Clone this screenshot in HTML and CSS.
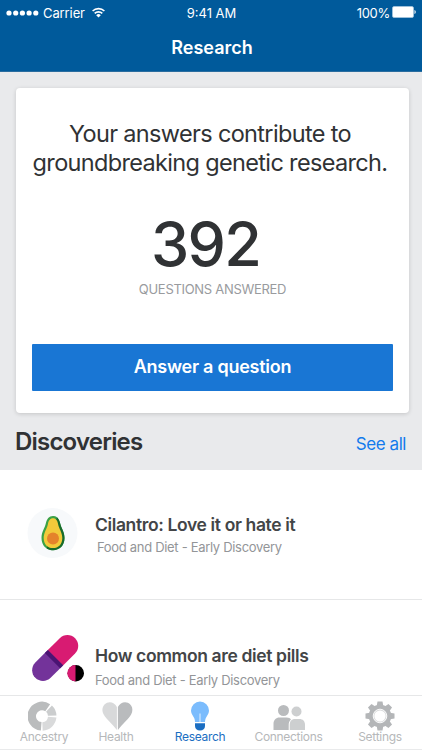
FILE: index.html
```html
<!DOCTYPE html>
<html lang="en">
<head>
    <meta charset="UTF-8">
    <meta name="viewport" content="width=device-width, initial-scale=1.0">
    <title>Research</title>
    <link rel="stylesheet" href="styles.css">
</head>
<body>
    <header class="header">
        <div class="status-bar">
            <div class="status-left">
                <svg class="signal" width="33" height="6" viewBox="0 0 33 6" fill="#fff">
                    <circle cx="3" cy="3" r="2.6"/><circle cx="9.7" cy="3" r="2.6"/><circle cx="16.4" cy="3" r="2.6"/><circle cx="23.1" cy="3" r="2.6"/><circle cx="29.8" cy="3" r="2.6"/>
                </svg>
                <span class="carrier">Carrier</span>
                <svg class="wifi" width="13" height="11" viewBox="0 0 13 11" fill="none" stroke="#fff" stroke-width="1.6">
                    <path d="M.6 4a8.400 8.400 0 0 1 11.800 0M2.700 6.400a5.400 5.400 0 0 1 7.600 0"/>
                    <path d="M6.500 10.600 4.200 8.300a3.200 3.200 0 0 1 4.600 0z" fill="#fff" stroke="none"/>
                </svg>
            </div>
            <div class="status-time">9:41 AM</div>
            <div class="status-right">
                <span class="percent">100%</span>
                <svg class="battery" width="25" height="12" viewBox="0 0 25 12">
                    <rect x=".5" y=".5" width="21" height="11" rx="1.5" fill="#fff" stroke="#a9c9e0" stroke-width=".7"/>
                    <path d="M22.5 4c1.600.4 1.600 3.600 0 4z" fill="#fff"/>
                </svg>
            </div>
        </div>
        <h1 class="title">Research</h1>
    </header>

    <section class="hero">
        <div class="card">
            <p class="intro">Your answers contribute to<br>groundbreaking genetic research.</p>
            <div class="count">392</div>
            <div class="count-label">QUESTIONS ANSWERED</div>
            <button type="button" class="answer-btn">Answer a question</button>
        </div>
        <div class="section-head">
            <h2>Discoveries</h2>
            <a class="see-all">See all</a>
        </div>
    </section>

    <main class="list">
        <article class="item">
            <svg class="item-icon" width="60" height="60" viewBox="0 0 60 60">
                <circle cx="27.5" cy="30" r="25" fill="#f7f9fb"/>
                <path d="M28 13c-4 0-6.300 3-7.200 7.500-.8 4.300-4.300 8-4.300 14.500 0 7.500 5 12.200 11.500 12.200S39.500 42.500 39.500 35c0-6.500-3.500-10.200-4.300-14.500C34.300 16 32 13 28 13z" fill="#3ba246"/>
                <path d="M28 13c4 0 6.300 3 7.200 7.500.8 4.300 4.300 8 4.300 14.500 0 7.500-5 12.200-11.500 12.200-2.500 0-4.600-.6-6.400-1.800L32 14.300C31 13.500 29.600 13 28 13z" fill="#186b2c"/>
                <path d="M28 15.200c-3 0-4.500 2.400-5.100 6-.9 4.700-4.200 8.200-4.200 13.800 0 6.300 3.900 10.100 9.300 10.100s9.300-3.800 9.300-10.100c0-5.600-3.300-9.100-4.200-13.800-.6-3.600-2.100-6-5.100-6z" fill="#f2ca3a"/>
                <circle cx="28" cy="35.500" r="6" fill="#e4832b"/>
            </svg>
            <div class="item-text">
                <h3>Cilantro: Love it or hate it</h3>
                <p class="indent">Food and Diet - Early Discovery</p>
            </div>
        </article>
        <article class="item">
            <svg class="item-icon" width="60" height="60" viewBox="0 0 60 60">
                <g transform="translate(30.200 25) rotate(-45)">
                    <path d="M0-10.800h17.300a10.800 10.800 0 0 1 0 21.600H0z" fill="#d81b72"/>
                    <path d="M0-10.800h-17.300a10.800 10.800 0 0 0 0 21.600H0z" fill="#73339a"/>
                    <path d="M-3.800-10.800h4.300v21.600h-4.300z" fill="#4a1473"/>
                </g>
                <circle cx="50.800" cy="40.200" r="8.200" fill="#000"/>
                <path d="M50.500 32a8.200 8.200 0 0 0 0 16.400z" fill="#d81b72"/>
            </svg>
            <div class="item-text">
                <h3>How common are diet pills</h3>
                <p>Food and Diet - Early Discovery</p>
            </div>
        </article>
    </main>

    <nav class="tabs">
        <div class="tab ancestry">
            <svg width="30" height="30" viewBox="0 0 30 30" fill="none" stroke-width="8.500">
                <path d="M13.200 25.300A10.200 10.200 0 1 1 19.700 6.700" stroke="#babcbd"/>
                <path d="M21 7.600A10.200 10.200 0 0 1 24.200 14.600" stroke="#cbcdce"/>
                <path d="M24.200 16.200A10.200 10.200 0 0 1 14.500 25.400" stroke="#d9dadb"/>
            </svg>
            <span>Ancestry</span>
        </div>
        <div class="tab health">
            <svg width="32" height="30" viewBox="0 0 32 30">
                <path d="M15.900 6C14 1.700 9.500.2 6 1.700 1.500 3.700.2 9 2.700 13.500 5.200 18 11 22.500 15.900 29z" fill="#d8d9da"/>
                <path d="M16.900 6c2-4.300 6.400-5.800 10-4.300 4.500 2 5.700 7.300 3.200 11.800C27.600 18 21.800 22.500 16.900 29z" fill="#b9bbbd"/>
            </svg>
            <span>Health</span>
        </div>
        <div class="tab research">
            <svg width="20" height="30" viewBox="0 0 20 30">
                <path d="M10 .5a9 9 0 0 0-9 9c0 4.500 4 6.200 4 11.500h10c0-5.300 4-7 4-11.500a9 9 0 0 0-9-9z" fill="#7bbcfd"/>
                <path d="M10 12.500v8.500" stroke="#fff" stroke-width=".8"/>
                <path d="M5 22.200h10V25c0 2.800-2 4.500-5 4.500S5 27.800 5 25z" fill="#1b6ec2"/>
            </svg>
            <span>Research</span>
        </div>
        <div class="tab connections">
            <svg width="34" height="30" viewBox="0 0 34 30">
                <circle cx="11.500" cy="9.500" r="5.500" fill="#b9bbbd"/>
                <path d="M1.500 29v-6c0-4 2.500-6.500 6-6.500h7c2.500 0 3.800.8 4.500 2-1.800 1.500-2.300 3.300-2.300 5.500v5z" fill="#b9bbbd"/>
                <circle cx="24.500" cy="10.500" r="5" fill="#cdcfd0"/>
                <path d="M17.700 29v-5c0-4 2.200-6 5.200-6h4.500c3.400 0 5.600 2 5.600 6v5z" fill="#cdcfd0"/>
            </svg>
            <span>Connections</span>
        </div>
        <div class="tab settings">
            <svg width="30" height="30" viewBox="-15 -15 30 30" fill="#b4b6b8">
                <circle r="11.300"/>
                <g id="teeth">
                    <path d="M-3.300-10l.8-4.500h5l.8 4.500zM-3.300 10l.8 4.500h5l.8-4.500z"/>
                    <path d="M-3.300-10l.8-4.500h5l.8 4.500zM-3.300 10l.8 4.500h5l.8-4.500z" transform="rotate(90)"/>
                </g>
                <use href="#teeth" transform="rotate(45)"/>
                <circle r="6.800" fill="#d9dadb" stroke="#fff" stroke-width=".9"/>
                <circle r="5.600" fill="#fff"/>
            </svg>
            <span>Settings</span>
        </div>
    </nav>
</body>
</html>
```
FILE: styles.css
```css
* {
    box-sizing: border-box;
}
body {
    margin: 0;
    width: 422px;
    height: 750px;
    overflow: hidden;
    display: flex;
    flex-direction: column;
    font-family: Inter, "Liberation Sans", sans-serif;
    background: #fff;
    color: #303234;
}
h1, h2, h3, p { margin: 0; }

/* Header */
.header {
    height: 72px;
    flex: none;
    background: #005a9b;
    color: #fff;
    border-bottom: 1px solid #2a6d9f;
}
.status-bar {
    display: grid;
    grid-template-columns: 1fr auto 1fr;
    align-items: center;
    height: 26px;
    padding: 0 5px 0 6px;
    font-size: 13px;
    line-height: 26px;
}
.status-left, .status-right {
    display: flex;
    align-items: center;
}
.status-right { justify-content: flex-end; }
.carrier { margin: 0 7px 0 4px; letter-spacing: -0.1px; }
.wifi { margin-top: -1px; }
.percent { margin-right: 2px; letter-spacing: -0.3px; }
.battery { margin-top: -2px; }
.title {
    text-align: center;
    font-size: 18px;
    font-weight: 600;
    line-height: 22px;
    padding-top: 11px;
    padding-left: 2px;
}

/* Card */
.hero {
    height: 398px;
    flex: none;
    padding: 16px 13px 0 16px;
    background: #e9eaec;
}
.card {
    height: 325px;
    padding: 31px 16px 0;
    background: #fff;
    border-radius: 4px;
    box-shadow: 0 1px 4px rgba(0, 0, 0, 0.16);
    text-align: center;
}
.intro {
    font-size: 23.5px;
    letter-spacing: -0.66px;
    line-height: 29px;
    padding-right: 5px;
    white-space: nowrap;
}
.count {
    font-size: 61px;
    font-weight: 500;
    letter-spacing: -1.8px;
    line-height: 70px;
    margin-top: 32px;
    padding-right: 14px;
}
.count-label {
    color: #999b9e;
    font-size: 13px;
    letter-spacing: -0.3px;
    line-height: 16px;
    margin-top: 2px;
}
.answer-btn {
    display: block;
    width: 100%;
    height: 47px;
    margin-top: 47px;
    padding: 0 0 3px;
    border: none;
    border-radius: 1px;
    background: #1976d4;
    color: #fff;
    font-family: inherit;
    font-size: 18px;
    font-weight: 600;
    letter-spacing: -0.25px;
}
.section-head {
    display: flex;
    justify-content: space-between;
    align-items: baseline;
    padding: 14px 3px 0 0;
}
.section-head h2 {
    font-size: 24px;
    font-weight: 600;
    letter-spacing: -0.8px;
    line-height: 30px;
    margin-left: -1px;
}
.see-all {
    color: #147bec;
    font-size: 17px;
    letter-spacing: -0.45px;
}

/* Discoveries */
.list { flex: 1; min-height: 0; overflow: hidden; }
.item {
    display: flex;
    height: 130px;
    padding: 33px 0 0 25px;
    border-bottom: 1px solid #e6e7e8;
}
.item-text { padding: 11px 0 0 10px; }
.item + .item .item-text { padding-top: 12px; }
.item h3 {
    color: #434547;
    font-size: 17.5px;
    font-weight: 600;
    letter-spacing: -0.37px;
    line-height: 22px;
}
.item p {
    color: #939598;
    font-size: 13px;
    letter-spacing: -0.31px;
    line-height: 18px;
    margin-top: 4px;
    white-space: nowrap;
}
.item .indent { padding-left: 2px; margin-top: 2px; }

/* Tabs */
.tabs {
    display: flex;
    height: 55px;
    flex: none;
    padding-top: 5px;
    border-top: 1px solid #e6e7e8;
    border-bottom: 1px solid #e9eaeb;
    background: #fff;
}
.tab {
    display: flex;
    flex-direction: column;
    align-items: center;
    color: #b6b8ba;
    font-size: 12px;
    letter-spacing: -0.3px;
    line-height: 14px;
}
.tab svg { flex: none; }
.tab span { margin-top: -1px; }
.ancestry { width: 48px; margin-left: 20px; }
.health { width: 36px; margin-left: 31px; }
.health span { margin-left: -2px; }
.ancestry svg { margin-left: -3px; }
.research { width: 50px; margin-left: 40px; color: #1b6ec2; }
.connections { width: 68px; margin-left: 30px; }
.connections span { margin-left: -1px; }
.settings { width: 44px; margin-left: 35px; }
```
